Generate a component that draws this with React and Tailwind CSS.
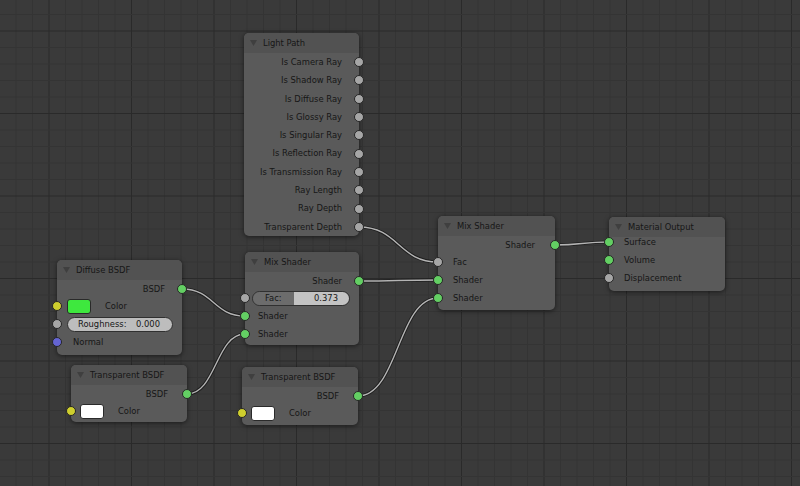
import React from "react";

const FONT = "font-['DejaVu_Sans','Liberation_Sans',sans-serif]";

function Grid() {
  const v = [];
  for (let j = -3; j <= 46; j++) {
    const x = 49 + j * 16.5;
    v.push(
      <line key={"v" + j} x1={x} y1={0} x2={x} y2={486} stroke={j % 5 === 0 ? "#2a2a2a" : "#343434"} strokeWidth={1} />
    );
  }
  for (let j = -2; j <= 28; j++) {
    const y = 31 + j * 16.5;
    v.push(
      <line key={"h" + j} x1={0} y1={y} x2={800} y2={y} stroke={j % 5 === 0 ? "#2a2a2a" : "#343434"} strokeWidth={1} />
    );
  }
  return (
    <svg className="absolute inset-0" width="800" height="486">
      {v}
    </svg>
  );
}

const WIRES = [
  [359, 227, 438, 262],
  [359, 281, 438, 280],
  [358, 396, 438, 298],
  [182, 289, 245, 316],
  [187, 394, 245, 334],
  [555, 245, 609, 242],
];

function Wires() {
  return (
    <svg className="absolute inset-0" width="800" height="486">
      {WIRES.map(([x1, y1, x2, y2], i) => {
        const d = Math.abs(x2 - x1) * 0.5;
        const p = `M${x1} ${y1} C${x1 + d} ${y1} ${x2 - d} ${y2} ${x2} ${y2}`;
        return (
          <g key={i}>
            <path d={p} fill="none" stroke="rgba(20,20,20,0.75)" strokeWidth="3.2" />
            <path d={p} fill="none" stroke="#b4b4b4" strokeWidth="1.4" />
          </g>
        );
      })}
    </svg>
  );
}

const SOCKET = {
  green: "bg-[#63cf63]",
  gray: "bg-[#a6a6a6]",
  yellow: "bg-[#cfcf2e]",
  blue: "bg-[#6464d2]",
};

function Socket({ side, color }) {
  const pos = side === "out" ? "right-[-5px]" : "left-[-5px]";
  return (
    <span
      className={`absolute ${pos} top-1/2 -translate-y-1/2 w-[10px] h-[10px] rounded-full border border-[#262626] ${SOCKET[color]}`}
    />
  );
}

function Row({ side, socket, children, className = "", h = "h-[18px]" }) {
  const align = side === "out" ? "justify-end pr-[17px]" : "pl-[15px]";
  return (
    <div className={`relative flex items-center ${h} ${align} ${className}`}>
      {children}
      {socket && <Socket side={side} color={socket} />}
    </div>
  );
}

function Node({ title, className, children }) {
  return (
    <div
      className={`absolute rounded-[5px] bg-[#5a5a5a] shadow-[0_1px_5px_rgba(0,0,0,0.55)] text-[8.4px] leading-none text-[#161616] ${FONT} ${className}`}
    >
      <div className="h-[20px] flex items-center gap-[6px] pl-[6px] rounded-t-[5px] bg-[#525252]">
        <svg width="7" height="6" viewBox="0 0 7 6">
          <path d="M0 0H7L3.5 6Z" fill="#3f3f3f" />
        </svg>
        <span>{title}</span>
      </div>
      {children}
    </div>
  );
}

function Swatch({ color }) {
  return <span className={`block w-[24px] h-[15px] rounded-[3px] border border-[#2a2a2a] ${color}`} />;
}

export default function App() {
  const lightRows = [
    "Is Camera Ray",
    "Is Shadow Ray",
    "Is Diffuse Ray",
    "Is Glossy Ray",
    "Is Singular Ray",
    "Is Reflection Ray",
    "Is Transmission Ray",
    "Ray Length",
    "Ray Depth",
    "Transparent Depth",
  ];
  return (
    <div className="relative w-[800px] h-[486px] overflow-hidden bg-[#3a3a3a]">
      <Grid />
      <Wires />

      {/* Light Path */}
      <Node title="Light Path" className="left-[244px] top-[33px] w-[115px] h-[203px]">
        {lightRows.map((r) => (
          <Row key={r} side="out" socket="gray" h="h-[18.3px]">
            {r}
          </Row>
        ))}
      </Node>

      {/* Diffuse BSDF */}
      <Node title="Diffuse BSDF" className="left-[57px] top-[260px] w-[125px] h-[95px]">
        <Row side="out" socket="green">BSDF</Row>
        <div className="-mt-px">
          <Row side="in" socket="yellow" className="!pl-[10px] gap-[14px]">
            <Swatch color="bg-[#3ee83e]" />
            <span>Color</span>
          </Row>
          <Row side="in" socket="gray" className="!pl-[10px] pr-[9px]">
            <div className="flex-1 h-[15px] rounded-full border border-[#303030] bg-[#bdbdbd] flex items-center justify-between pl-[10px] pr-[12px]">
              <span>Roughness:</span>
              <span>0.000</span>
            </div>
          </Row>
          <Row side="in" socket="blue" className="!pl-[16px]">Normal</Row>
        </div>
      </Node>

      {/* Mix Shader (middle) */}
      <Node title="Mix Shader" className="left-[245px] top-[252px] w-[114px] h-[93px]">
        <Row side="out" socket="green">Shader</Row>
        <div className="-mt-px">
          <Row side="in" socket="gray" className="!pl-[7px] pr-[9px]">
            <div className="flex-1 h-[15px] rounded-full border border-[#303030] overflow-hidden flex">
              <div className="w-[41px] bg-[#6c6c6c] flex items-center pl-[12px]">Fac:</div>
              <div className="flex-1 bg-[#c3c3c3] flex items-center justify-end pr-[11px]">0.373</div>
            </div>
          </Row>
          <Row side="in" socket="green" className="!pl-[13px]">Shader</Row>
          <Row side="in" socket="green" className="!pl-[13px]">Shader</Row>
        </div>
      </Node>

      {/* Mix Shader (right) */}
      <Node title="Mix Shader" className="left-[438px] top-[216px] w-[117px] h-[94px]">
        <Row side="out" socket="green" className="!pr-[20px]">Shader</Row>
        <div className="-mt-px">
          <Row side="in" socket="gray">Fac</Row>
          <Row side="in" socket="green">Shader</Row>
          <Row side="in" socket="green">Shader</Row>
        </div>
      </Node>

      {/* Material Output */}
      <Node title="Material Output" className="left-[609px] top-[217px] w-[116px] h-[74px]">
        <div className="-mt-[4px]">
          <Row side="in" socket="green">Surface</Row>
          <Row side="in" socket="green">Volume</Row>
          <Row side="in" socket="gray">Displacement</Row>
        </div>
      </Node>

      {/* Transparent BSDF (left) */}
      <Node title="Transparent BSDF" className="left-[71px] top-[365px] w-[116px] h-[57px]">
        <Row side="out" socket="green" className="!pr-[19px]">BSDF</Row>
        <div className="-mt-px">
          <Row side="in" socket="yellow" className="!pl-[9px] gap-[14px]">
            <Swatch color="bg-[#ffffff]" />
            <span>Color</span>
          </Row>
        </div>
      </Node>

      {/* Transparent BSDF (right) */}
      <Node title="Transparent BSDF" className="left-[242px] top-[367px] w-[116px] h-[58px]">
        <Row side="out" socket="green" className="!pr-[19px]">BSDF</Row>
        <div className="-mt-px">
          <Row side="in" socket="yellow" className="!pl-[9px] gap-[14px]">
            <Swatch color="bg-[#ffffff]" />
            <span>Color</span>
          </Row>
        </div>
      </Node>
    </div>
  );
}
